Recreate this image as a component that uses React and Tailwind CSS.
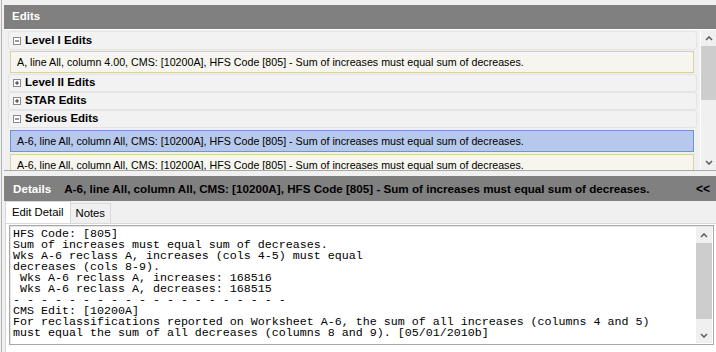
import React from 'react';

const ui = { fontFamily: '"Liberation Sans", Arial, sans-serif' };
const mono = { fontFamily: '"Liberation Mono", "DejaVu Sans Mono", monospace' };

const msg = 'HFS Code [805] - Sum of increases must equal sum of decreases.';

const Toggle = ({ open }) => (
  <svg width="8" height="8" viewBox="0 0 8 8" className="shrink-0">
    <rect x="0.5" y="0.5" width="7" height="7" fill="#fff" stroke="#8a8a8a" />
    <path d="M2 4h4" stroke="#333" />
    {!open && <path d="M4 2v4" stroke="#333" />}
  </svg>
);

const Chevron = ({ down }) => (
  <svg width="8" height="5" viewBox="0 0 8 5">
    <path d={down ? 'M1 1l3 3 3-3' : 'M1 4l3-3 3 3'} stroke="#606060" strokeWidth="1.6" fill="none" />
  </svg>
);

const Group = ({ label, open, className = 'h-[18px]' }) => (
  <div className={`ml-[4px] mr-[3px] flex items-center gap-[4px] pl-[4px] rounded-[3px] border border-[#e4e4e4] bg-[#f2f2f2] ${className}`}>
    <Toggle open={open} />
    <span className="text-[11.5px] font-bold text-black">{label}</span>
  </div>
);

const Item = ({ text, selected, className = '' }) => (
  <div
    className={`h-[22px] ml-[6px] mr-[6px] flex items-center pl-[6px] border text-[10.7px] text-black whitespace-nowrap overflow-hidden ${
      selected ? 'bg-[#b6c8ec] border-[#6f93dc]' : 'bg-[#f6f5ee] border-[#d8d1a2]'
    } ${className}`}
  >
    {text}
  </div>
);

const lines = [
  'HFS Code: [805]',
  'Sum of increases must equal sum of decreases.',
  'Wks A-6 reclass A, increases (cols 4-5) must equal',
  'decreases (cols 8-9).',
  ' Wks A-6 reclass A, increases: 168516',
  ' Wks A-6 reclass A, decreases: 168515',
  '- - - - - - - - - - - - - - - - - - - -',
  'CMS Edit: [10200A]',
  'For reclassifications reported on Worksheet A-6, the sum of all increases (columns 4 and 5)',
  'must equal the sum of all decreases (columns 8 and 9). [05/01/2010b]',
];

const App = () => {
  return (
    <div className="w-[716px] h-[352px] bg-[#f0f0f0] overflow-hidden pl-px" style={ui}>
      <div className="h-full border-l border-[#b4b4b4] pl-[2px] flex flex-col">
        {/* Edits panel */}
        <div className="mt-[5px] h-[24px] bg-[#808080] flex items-center pl-[8px]">
          <span className="text-[11.5px] font-bold text-white">Edits</span>
        </div>
        <div className="h-[142px] flex border-t border-white border-b border-b-[#a9a9a9]">
          <div className="flex-1 overflow-hidden">
            <Group label="Level I Edits" open className="h-[19px] mt-px" />
            <Item text={`A, line All, column 4.00, CMS: [10200A], ${msg}`} className="mt-px" />
            <Group label="Level II Edits" className="h-[18px] mt-px" />
            <Group label="STAR Edits" />
            <Group label="Serious Edits" open />
            <Item text={`A-6, line All, column All, CMS: [10200A], ${msg}`} selected className="mt-[2px]" />
            <Item text={`A-6, line All, column All, CMS: [10200A], ${msg}`} className="mt-[2px]" />
          </div>
          <div className="w-[16px] border-l border-white bg-[#f0f0f0] flex flex-col items-center">
            <div className="h-[16px] flex items-center justify-center">
              <Chevron />
            </div>
            <div className="w-full h-[54px] bg-[#cdcdcd]" />
            <div className="flex-1" />
            <div className="h-[16px] flex items-center justify-center">
              <Chevron down />
            </div>
          </div>
        </div>

        {/* Details panel */}
        <div className="mt-[5px] h-[25px] bg-[#808080] flex items-center pl-[9px] pr-[6px] text-[11.65px] font-bold whitespace-nowrap">
          <span className="text-white">Details</span>
          <span className="ml-[13px] text-black">A-6, line All, column All, CMS: [10200A], {msg}</span>
          <span className="ml-auto text-black text-[12px]">&lt;&lt;</span>
        </div>
        <div className="flex items-end h-[22px] pl-[1px] text-[11.3px] text-black">
          <div className="h-[22px] px-[6px] flex items-center bg-white border border-b-0 border-[#d9d9d9]">Edit Detail</div>
          <div className="h-[20px] px-[5px] flex items-center bg-[#f0f0f0] border border-l-0 border-b-0 border-[#d9d9d9]">Notes</div>
        </div>
        <div className="flex-1 ml-[1px] border-t border-l border-[#d9d9d9] bg-white pl-[3px] pt-[1px] pr-[2px]">
          <div className="h-[120px] flex border border-[#a8a8a8] shadow-[inset_1px_1px_0_#e6e6e6] bg-white">
            <pre className="flex-1 pl-[3px] pt-[3px] text-[11.67px] leading-[11px] text-black overflow-hidden" style={mono}>
              {lines.join('\n')}
            </pre>
            <div className="w-[16px] my-[1px] mr-px bg-[#f0f0f0] flex flex-col items-center">
              <div className="h-[16px] flex items-center justify-center">
                <Chevron />
              </div>
              <div className="w-full h-[76px] bg-[#cdcdcd]" />
              <div className="flex-1" />
              <div className="h-[16px] flex items-center justify-center">
                <Chevron down />
              </div>
            </div>
          </div>
        </div>
      </div>
    </div>
  );
};

export default App;
